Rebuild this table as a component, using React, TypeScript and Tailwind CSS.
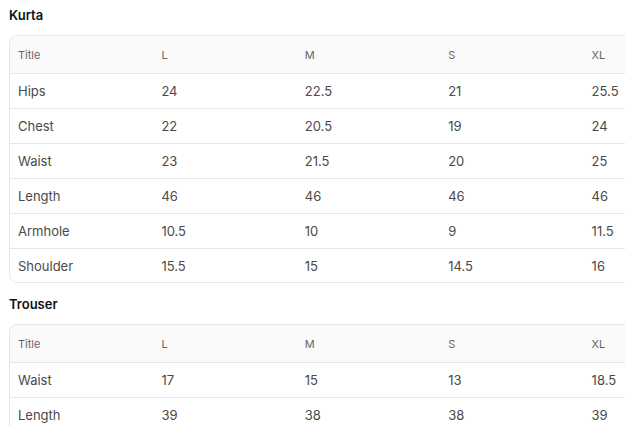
import React from 'react'

type SizeTable = {
  name: string;
  rows: [string, string, string, string, string][];
}

const sizes = ['L', 'M', 'S', 'XL'];

const tables: SizeTable[] = [
  {
    name: 'Kurta',
    rows: [
      ['Hips', '24', '22.5', '21', '25.5'],
      ['Chest', '22', '20.5', '19', '24'],
      ['Waist', '23', '21.5', '20', '25'],
      ['Length', '46', '46', '46', '46'],
      ['Armhole', '10.5', '10', '9', '11.5'],
      ['Shoulder', '15.5', '15', '14.5', '16'],
    ],
  },
  {
    name: 'Trouser',
    rows: [
      ['Waist', '17', '15', '13', '18.5'],
      ['Length', '39', '38', '38', '39'],
      ['Hips', '40', '38', '36', '42'],
    ],
  },
];

const SizeChart = ({ table }: { table: SizeTable }) => {
  return (
    <div className="mb-[11px]">
      <h3 className="text-[13px] leading-[20px] font-semibold text-[#111] mb-[10px]">
        {table.name}
      </h3>
      <div className="w-[719px] border border-[#e6e6e6] rounded-[8px] overflow-hidden">
        {/* header row */}
        <div className="grid grid-cols-5 h-[38px] items-center bg-[#fafafa] border-b border-[#e6e6e6] text-[11px] text-[#666] pt-[1px]">
          <div className="pl-[8px]">Title</div>
          {sizes.map((s) => (
            <div key={s} className="pl-[8px]">{s}</div>
          ))}
        </div>
        {table.rows.map((row, i) => (
          <div
            key={row[0]}
            className={
              i === table.rows.length - 1
                ? 'grid grid-cols-5 h-[33px] items-center pt-[2px] text-[13px] text-[#4a4a4a]'
                : 'grid grid-cols-5 h-[35px] items-center pt-[2px] border-b border-[#e6e6e6] text-[13px] text-[#4a4a4a]'
            }
          >
            {row.map((cell, j) => (
              <div key={j} className="pl-[8px]">{cell}</div>
            ))}
          </div>
        ))}
      </div>
    </div>
  );
}

const App = () => {
  return (
    <div className="w-[625px] h-[426px] overflow-hidden bg-white px-[9px] pt-[5px] font-['Inter',sans-serif]">
      {tables.map((t) => (
        <SizeChart key={t.name} table={t} />
      ))}
    </div>
  );
}

export default App
